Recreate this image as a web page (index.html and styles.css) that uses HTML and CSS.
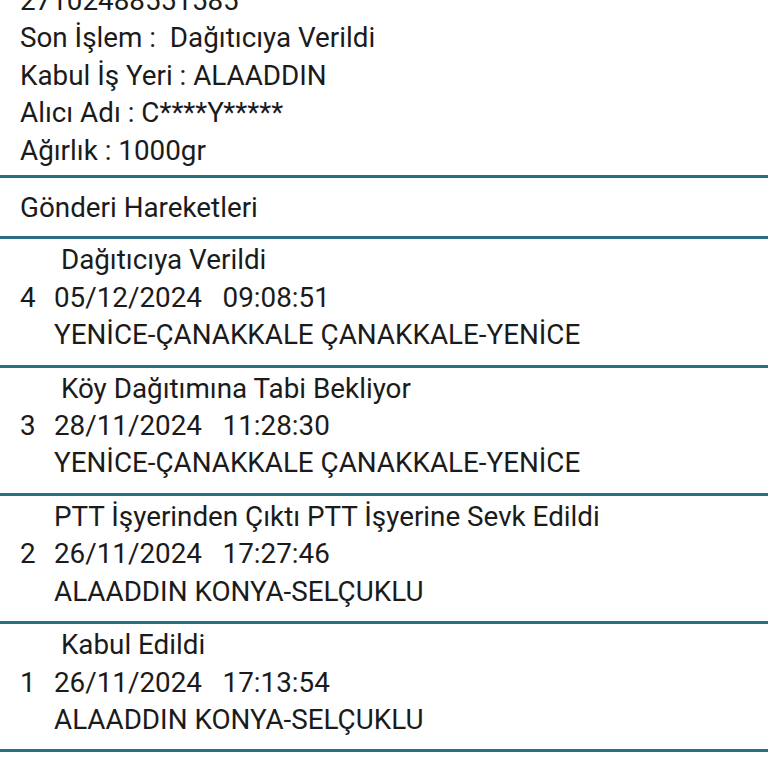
FILE: index.html
```html
<!DOCTYPE html>
<html lang="tr">
<head>
<meta charset="utf-8">
<title>Gönderi Takip</title>
<link rel="stylesheet" href="styles.css">
</head>
<body>
<main class="screen">
  <section class="summary">
    <p class="line">27102488551585</p>
    <p class="line">Son İşlem :  Dağıtıcıya Verildi</p>
    <p class="line">Kabul İş Yeri : ALAADDIN</p>
    <p class="line">Alıcı Adı : C****Y*****</p>
    <p class="line">Ağırlık : 1000gr</p>
  </section>
  <h2 class="section-title">Gönderi Hareketleri</h2>
  <ol class="events">
    <li class="event">
      <span class="num">4</span>
      <span class="title"> Dağıtıcıya Verildi</span>
      <span class="when">05/12/2024   09:08:51</span>
      <span class="place">YENİCE-ÇANAKKALE ÇANAKKALE-YENİCE</span>
    </li>
    <li class="event">
      <span class="num">3</span>
      <span class="title"> Köy Dağıtımına Tabi Bekliyor</span>
      <span class="when">28/11/2024   11:28:30</span>
      <span class="place">YENİCE-ÇANAKKALE ÇANAKKALE-YENİCE</span>
    </li>
    <li class="event">
      <span class="num">2</span>
      <span class="title">PTT İşyerinden Çıktı PTT İşyerine Sevk Edildi</span>
      <span class="when">26/11/2024   17:27:46</span>
      <span class="place">ALAADDIN KONYA-SELÇUKLU</span>
    </li>
    <li class="event">
      <span class="num">1</span>
      <span class="title"> Kabul Edildi</span>
      <span class="when">26/11/2024   17:13:54</span>
      <span class="place">ALAADDIN KONYA-SELÇUKLU</span>
    </li>
  </ol>
</main>
</body>
</html>
```

FILE: styles.css
```css
html, body {
  margin: 0;
  padding: 0;
  background: #ffffff;
  overflow: hidden;
}

.screen {
  font-family: Roboto, "Noto Sans", sans-serif;
  font-size: 27.8px;
  line-height: 37.4px;
  color: #1b1b1b;
  margin-top: -18px;
}

.summary {
  padding: 0 20px 6px;
  border-bottom: 3px solid #2a6d84;
}

.line {
  margin: 0;
  white-space: pre;
}

.section-title {
  margin: 0;
  font-size: inherit;
  font-weight: 400;
  padding: 11px 20px 10px;
  border-bottom: 3px solid #2a6d84;
}

.events {
  list-style: none;
  margin: 0;
  padding: 0;
}

.event {
  display: grid;
  grid-template-columns: 34px 1fr;
  padding: 2px 20px 11px;
  border-bottom: 3px solid #2a6d84;
}

.num {
  grid-column: 1;
  grid-row: 2;
}

.title,
.when,
.place {
  grid-column: 2;
  white-space: pre;
}

.title { grid-row: 1; }
.when { grid-row: 2; }
.place { grid-row: 3; }
```
